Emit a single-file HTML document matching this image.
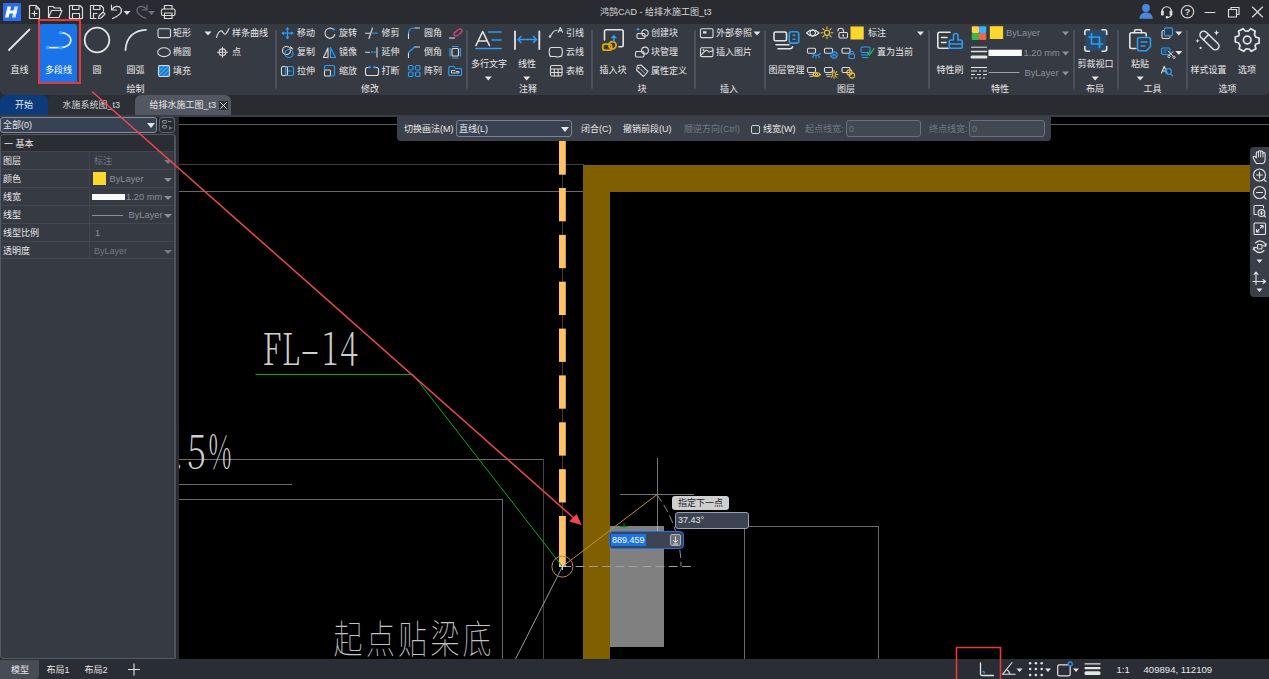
<!DOCTYPE html>
<html lang="zh-CN">
<head>
<meta charset="utf-8">
<title>鸿鹄CAD - 给排水施工图_t3</title>
<style>
*{box-sizing:border-box;margin:0;padding:0}
html,body{width:1269px;height:679px;overflow:hidden;background:#2a2b31}
body{font-family:"Liberation Sans","Noto Sans CJK SC",sans-serif;font-size:9px;color:#e6e6e6;position:relative}
.abs{position:absolute}
#title{position:absolute;left:0;top:0;width:1269px;height:24px;background:#2a2b31}
#ribbon{position:absolute;left:0;top:24px;width:1269px;height:71px;background:#363a43;border-radius:0 0 5px 5px}
#tabs{position:absolute;left:0;top:95px;width:1269px;height:20px;background:#2a2b31}
#strip{position:absolute;left:0;top:115px;width:1269px;height:2px;background:#3a3d46}
#left{position:absolute;left:0;top:117px;width:179px;height:542px;background:#2a2c33}
#canvas{position:absolute;left:179px;top:117px;width:1090px;height:542px;background:#000;overflow:hidden}
#status{position:absolute;left:0;top:659px;width:1269px;height:20px;background:#2b2d34}
.t{position:absolute;white-space:nowrap;line-height:12px;height:12px;font-size:9px;color:#e8e8e8;transform:translateY(-50%)}
.tc{transform:translate(-50%,-50%)}
.g{color:#8b909a}
.sep{position:absolute;top:30px;width:2px;height:59px;background:#4d515b;margin-left:-0.500px;border-radius:1px}
svg{position:absolute;left:0;top:0;overflow:visible}
</style>
</head>
<body>
<div id="title">
<div class="abs" style="left:3px;top:3px;width:18px;height:18px;background:#2a6cf0;border-radius:1px"></div>
<svg width="1269" height="24" viewBox="0 0 1269 24">
<!-- logo H -->
<g fill="#fff"><path d="M7.5,6.5 H11 L8.6,17.5 H5 Z"/><path d="M14.5,6.5 H18 L15.6,17.5 H12 Z" fill="#cfe6ff"/><path d="M8,10.5 H17 L16.3,13.5 H7.3 Z"/></g>
<g stroke="#dcdcdc" stroke-width="1.150" fill="none" stroke-linecap="round" stroke-linejoin="round">
<!-- new -->
<path d="M29.5,5.5 H36 L39.5,9 V18.5 H29.5 Z M36,5.5 V9 H39.5"/><path d="M34.5,11 V16 M32,13.5 H37" />
<!-- open -->
<path d="M48.500,17.5 V6.5 H53 L54.5,8 H60.5 V10"/><path d="M48.500,17.500 L51.500,10.500 H62 L59,17.500 Z"/>
<!-- save -->
<path d="M69.500,5.500 H80 L82.500,8 V18.500 H69.500 Z"/><path d="M72.500,5.500 V9.500 H79 V5.500 M72.500,18.500 V13.500 H79.500 V18.500"/>
<!-- save as -->
<path d="M96,18.500 H90.500 V5.500 H101 L103.500,8 V11"/><path d="M93.500,5.500 V9.500 H100 V5.500 M93.500,18.500 V13.500 H97"/><path d="M98.500,18.500 L99,16 L103,12 L105,14 L101,18 Z"/>
<!-- undo -->
<path d="M111.500,5 V10 H116.500"/><path d="M112,9.500 C114,6 119,5 121,8.500 C123,12 119,16 112.500,18.500"/>
</g>
<path d="M123.500,11 H130.500 L127,15 Z" fill="#dcdcdc"/>
<g stroke="#6e727b" stroke-width="1.150" fill="none" stroke-linecap="round" stroke-linejoin="round">
<path d="M147,5 V10 H142"/><path d="M146.500,9.500 C144.500,6 139.500,5 137.500,8.500 C135.500,12 139.500,16 146,18.500"/>
</g>
<path d="M148,11 H155 L151.500,15 Z" fill="#6e727b"/>
<g stroke="#dcdcdc" stroke-width="1.150" fill="none" stroke-linecap="round" stroke-linejoin="round">
<!-- print -->
<path d="M164.500,9 V5.500 H172 V9"/><rect x="161.500" y="9" width="13.500" height="6.500" rx="1.500"/><path d="M164.500,13 H172 V18.500 H164.500 Z"/>
</g>
<!-- right icons -->
<g fill="#4a88e0"><circle cx="1146" cy="8" r="3.900"/><path d="M1139.500,18.800 C1139.500,14.500 1142.500,12.500 1146,12.500 C1149.500,12.500 1152.800,14.500 1152.800,18.800 Z"/></g>
<g stroke="#dcdcdc" stroke-width="1.150" fill="none" stroke-linecap="round">
<path d="M1162,12.500 V11.500 A4.700,4.700 0 0 1 1171.400,11.500 V13.500 C1171.400,16 1169.500,17.300 1167.500,17.300"/>
<circle cx="1187.500" cy="11.700" r="6.200"/>
<path d="M1205,12.500 H1215"/>
<path d="M1228.500,9.500 H1236.500 V17 H1228.500 Z M1231,9.500 V7.500 H1239 V14.500 H1236.500"/>
<path d="M1252.500,7 L1262.500,17 M1262.500,7 L1252.500,17"/>
</g>
<g fill="#dcdcdc"><rect x="1161" y="10.500" width="2.800" height="5" rx="1"/><rect x="1169.600" y="10.500" width="2.800" height="5" rx="1"/><circle cx="1167" cy="17.300" r="1.300"/></g>
<text x="1187.500" y="15.200" font-family="'Liberation Sans',sans-serif" font-size="9.500" font-weight="bold" fill="#dcdcdc" text-anchor="middle">?</text>
</svg>
<span class="t" style="left:600px;top:12px;color:#d8d8d8">鸿鹄CAD - 给排水施工图_t3</span>

</div>
<div id="ribbon"></div>
<div id="tabs">
<div class="abs" style="left:0;top:0px;width:48px;height:20px;background:#0b3b7d;border-radius:6px 6px 0 0"></div>
<span class="t tc" style="left:24px;top:10px;font-size:9px">开始</span>
<div class="abs" style="left:48px;top:0px;width:87px;height:20px;background:#2d2f36;border-radius:6px 6px 0 0"></div>
<span class="t" style="left:62.500px;top:10px;color:#d8d8d8;font-size:9px">水施系统图_t3</span>
<div class="abs" style="left:135px;top:0px;width:96px;height:20px;background:#535761;border-radius:6px 6px 0 0"></div>
<span class="t" style="left:149.500px;top:10px;font-size:9px">给排水施工图_t3</span>
<svg width="10" height="10" style="left:218.500px;top:5.500px"><rect x="0.500" y="0.500" width="8" height="8" fill="#2b2e35" stroke="#2b2e35"/><path d="M1.300,1.300 L7.700,7.700 M7.700,1.300 L1.300,7.700" stroke="#e4e4e4" stroke-width="1"/></svg>

</div>
<div id="strip"></div>
<div id="left">
<div class="abs" style="left:0;top:0;width:157px;height:16px;background:#374253;border:1px solid #8a8f99;border-radius:3px"></div>
<span class="t" style="left:3px;top:8px">全部(0)</span>
<div class="abs" style="left:147px;top:6px;border:4px solid transparent;border-top:5px solid #e6e6e6;border-bottom:0"></div>
<div class="abs" style="left:159px;top:0;width:16px;height:16px;border:1px solid #5d626c;border-radius:3px"></div>
<svg width="16" height="16" style="left:159px;top:0"><g stroke="#8a8f99" stroke-width="1" fill="none"><rect x="3.500" y="3.500" width="4" height="2.500" rx="0.500"/><rect x="3.500" y="8.500" width="4" height="2.500" rx="0.500"/><path d="M9,4.500 H12.500"/></g><path d="M10,9 L13.500,11 L10,13 Z" fill="#6e737d"/></svg>
<!-- property panel -->
<div class="abs" style="left:0;top:17px;width:176px;height:525px;background:#363a43;border:1px solid #555963;border-right:2px solid #4f535d;border-radius:4px 4px 0 4px;overflow:hidden">
<div class="abs" style="left:0;top:0;width:176px;height:16px;background:#2b2d34"></div>
<div class="abs" style="left:0;top:16px;width:176px;height:109px;background:#363a43"></div>
<div class="abs" style="left:0;top:16px;width:176px;height:1px;background:#424650"></div>
<div class="abs" style="left:0;top:34px;width:176px;height:1px;background:#424650"></div>
<div class="abs" style="left:0;top:52px;width:176px;height:1px;background:#424650"></div>
<div class="abs" style="left:0;top:70px;width:176px;height:1px;background:#424650"></div>
<div class="abs" style="left:0;top:88px;width:176px;height:1px;background:#424650"></div>
<div class="abs" style="left:0;top:106px;width:176px;height:1px;background:#424650"></div>
<div class="abs" style="left:0;top:123px;width:176px;height:1px;background:#424650"></div>
<div class="abs" style="left:88px;top:16px;width:1px;height:108px;background:#40444f"></div>
</div>
<span class="t" style="left:4px;top:26.500px">一 基本</span>
<span class="t" style="left:3px;top:44px">图层</span>
<span class="t" style="left:3px;top:62px">颜色</span>
<span class="t" style="left:3px;top:80px">线宽</span>
<span class="t" style="left:3px;top:98px">线型</span>
<span class="t" style="left:3px;top:116px">线型比例</span>
<span class="t" style="left:3px;top:134px">透明度</span>
<span class="t g" style="left:94px;top:44px;color:#747985">标注</span>
<div class="abs" style="left:93px;top:55px;width:13px;height:13px;background:#fad72d"></div>
<span class="t g" style="left:109.500px;top:62px;font-size:9.300px">ByLayer</span>
<div class="abs" style="left:92px;top:77px;width:33px;height:6px;background:#fafafa"></div>
<span class="t g" style="left:126px;top:80px;font-size:9.300px">1.20 mm</span>
<div class="abs" style="left:92px;top:98px;width:31px;height:1px;background:#8b909a"></div>
<span class="t g" style="left:128.500px;top:98px;font-size:9.300px">ByLayer</span>
<span class="t g" style="left:95px;top:116px;font-size:9.300px">1</span>
<span class="t g" style="left:94px;top:134px;font-size:9px;color:#747985">ByLayer</span>
<div class="abs" style="left:164px;top:43px;border:4px solid transparent;border-top:4.500px solid #747985;border-bottom:0"></div>
<div class="abs" style="left:164px;top:61px;border:4px solid transparent;border-top:4.500px solid #8b909a;border-bottom:0"></div>
<div class="abs" style="left:164px;top:79px;border:4px solid transparent;border-top:4.500px solid #8b909a;border-bottom:0"></div>
<div class="abs" style="left:164px;top:97px;border:4px solid transparent;border-top:4.500px solid #8b909a;border-bottom:0"></div>
<div class="abs" style="left:164px;top:133px;border:4px solid transparent;border-top:4.500px solid #747985;border-bottom:0"></div>

</div>
<div id="canvas">
<svg width="1090" height="542" viewBox="179 117 1090 542" shape-rendering="auto">
<!-- grey thin lines -->
<g stroke="#6a6a6a" stroke-width="1" fill="none" shape-rendering="crispEdges">
<line x1="179" y1="124.5" x2="1269" y2="124.5" stroke="#5c5c5c"/>
<line x1="179" y1="164.5" x2="584" y2="164.5" stroke="#3e3e3e"/>
<line x1="179" y1="191.5" x2="584" y2="191.5"/>
<line x1="179" y1="459.5" x2="544" y2="459.5"/><line x1="543.5" y1="459" x2="543.5" y2="659" stroke="#444"/>
<line x1="179" y1="484.5" x2="292" y2="484.5"/>
<polyline points="179,499.5 502.5,499.5 502.5,659"/>
<polyline points="744.5,659 744.5,526.5 878.5,526.5 878.5,659"/>
</g>
<!-- brown wall -->
<path d="M583,165 H1269 V192 H610 V659 H583 Z" fill="#7f5f00"/>
<!-- grey block -->
<rect x="610" y="526" width="54" height="121" fill="#808080"/>
<!-- dashed orange line -->
<line x1="562.5" y1="141" x2="562.5" y2="566" stroke="#4d3d00" stroke-width="1"/>
<g fill="#ffc266">
<rect x="559" y="141.0" width="6.800" height="33.7"/>
<rect x="559" y="188.0" width="6.800" height="33.3"/>
<rect x="559" y="234.9" width="6.800" height="33.3"/>
<rect x="559" y="281.7" width="6.800" height="33.3"/>
<rect x="559" y="328.6" width="6.800" height="33.3"/>
<rect x="559" y="375.4" width="6.800" height="33.3"/>
<rect x="559" y="422.3" width="6.800" height="33.3"/>
<rect x="559" y="469.2" width="6.800" height="33.3"/>
<rect x="559" y="516.0" width="6.800" height="50.5"/>
</g>
<!-- green leader -->
<polyline points="255.500,374.500 413,374.500 562.400,566.600" stroke="#00b000" stroke-width="1" fill="none"/>
<!-- grey slanted line -->
<line x1="562.4" y1="566.6" x2="515.5" y2="659" stroke="#9a9a9a" stroke-width="1"/>
<!-- crosshair -->
<g stroke="#757575" stroke-width="1" shape-rendering="crispEdges">
<line x1="657.5" y1="458" x2="657.5" y2="531"/>
<line x1="620" y1="494.5" x2="694" y2="494.5"/>
</g>
<!-- light stripe in grey block -->
<rect x="657" y="526" width="1" height="6" fill="#b0b0b0"/>
<!-- green tick -->
<path d="M620,526.500 H628 M624,523 V528" stroke="#009000" stroke-width="1" fill="none"/>
<!-- yellow rubber band -->
<line x1="562.4" y1="566.6" x2="657" y2="494.500" stroke="#b89a14" stroke-width="1"/>
<!-- dashed horizontal + arc -->
<line x1="562.400" y1="566.500" x2="692" y2="566.500" stroke="#a0a0a0" stroke-width="1" stroke-dasharray="8.800,4.500"/>
<path d="M657,495 A119,119 0 0 1 681,566" stroke="#909090" stroke-width="1" fill="none" stroke-dasharray="8,4"/>
<!-- snap circle -->
<circle cx="562.4" cy="566.6" r="10.5" stroke="#b8875a" stroke-width="1" fill="none"/>
<path d="M559,566.5 H566 M562.5,563 V570" stroke="#d0d0d0" stroke-width="1"/>
<!-- CAD texts -->
<text y="364.600" font-family="'Noto Serif CJK SC','Liberation Serif',serif" font-weight="200" font-size="44.500" fill="#cfcfcf"><tspan x="262.500" textLength="19" lengthAdjust="spacingAndGlyphs">F</tspan><tspan x="282" textLength="18" lengthAdjust="spacingAndGlyphs">L</tspan><tspan x="300" textLength="20" lengthAdjust="spacingAndGlyphs">-</tspan><tspan x="322" textLength="16" lengthAdjust="spacingAndGlyphs">1</tspan><tspan x="340" textLength="18" lengthAdjust="spacingAndGlyphs">4</tspan></text>
<text y="467.800" font-family="'Noto Serif CJK SC','Liberation Serif',serif" font-weight="200" font-size="45.500" fill="#cfcfcf"><tspan x="172" textLength="12" lengthAdjust="spacingAndGlyphs">.</tspan><tspan x="187" textLength="19" lengthAdjust="spacingAndGlyphs">5</tspan><tspan x="208.500" textLength="23" lengthAdjust="spacingAndGlyphs">%</tspan></text>
<g transform="translate(0,652.500) scale(1,1.330)"><text y="0" x="333.500 366 398 430.500 462.500" font-family="'Noto Sans CJK SC',sans-serif" font-weight="100" font-size="29" fill="#c4c4c4">起点贴梁底</text></g>
</svg>
<!-- options bar -->
<div class="abs" style="left:218px;top:0;width:654px;height:24px;background:#3c404b;border-radius:0 0 4px 4px"></div>
<span class="t" style="left:225px;top:12px">切换画法(M)</span>
<div class="abs" style="left:277px;top:3px;width:116px;height:17px;background:#384252;border:1px solid #7d828d;border-radius:3px"></div>
<span class="t" style="left:280px;top:12px">直线(L)</span>
<div class="abs" style="left:382px;top:10px;border:4px solid transparent;border-top:5px solid #e6e6e6;border-bottom:0"></div>
<span class="t" style="left:402px;top:12px">闭合(C)</span>
<span class="t" style="left:444px;top:12px">撤销前段(U)</span>
<span class="t g" style="left:505px;top:12px;color:#747985">顺逆方向(Ctrl)</span>
<div class="abs" style="left:572px;top:8px;width:9px;height:9px;border:1px solid #cfcfcf;border-radius:2px"></div>
<span class="t" style="left:584px;top:12px">线宽(W)</span>
<span class="t g" style="left:626px;top:12px;color:#747985">起点线宽:</span>
<div class="abs" style="left:667px;top:3px;width:75px;height:17px;background:#434751;border:1px solid #6b707b;border-radius:3px"></div>
<span class="t g" style="left:670px;top:12px;color:#747985">0</span>
<span class="t g" style="left:750px;top:12px;color:#747985">终点线宽:</span>
<div class="abs" style="left:790px;top:3px;width:76px;height:17px;background:#434751;border:1px solid #6b707b;border-radius:3px"></div>
<span class="t g" style="left:793px;top:12px;color:#747985">0</span>
<!-- dynamic input -->
<div class="abs" style="left:493px;top:379px;width:57px;height:14px;background:#cfcfcf;border-radius:3px"></div>
<span class="t" style="left:499px;top:386px;color:#222">指定下一点</span>
<div class="abs" style="left:496px;top:394.500px;width:74px;height:17px;background:#3c4353;border:1px solid #9aa0ab;border-radius:3px"></div>
<span class="t" style="left:499px;top:403px">37.43°</span>
<div class="abs" style="left:430px;top:414px;width:75px;height:18px;background:#3c4353;border:1.500px solid #1a73e8;border-radius:4px"></div>
<div class="abs" style="left:432px;top:417px;width:35px;height:12px;background:#1a73e8"></div>
<span class="t" style="left:433px;top:423px;color:#fff">889.459</span>
<div class="abs" style="left:491px;top:417px;width:11px;height:12px;background:#6a6f7a;border:1px solid #b0b4bc;border-radius:2px"></div>
<svg width="11" height="12" style="left:491px;top:417px"><path d="M5.5,2.5 V8 M3,6 L5.5,8.5 L8,6 M3,10 H8" stroke="#e0e0e0" stroke-width="1" fill="none"/></svg>
<!-- nav bar -->
<div class="abs" style="left:1071px;top:30px;width:19px;height:150px;background:#3a3e48;border-radius:4px 0 0 4px"></div>
<svg width="1090" height="542" viewBox="179 117 1090 542">
<g stroke="#e4e4e4" stroke-width="1.100" fill="none" stroke-linecap="round" stroke-linejoin="round">
<!-- hand -->
<path d="M1256.500,163.500 Q1254,160 1253.300,157.800 Q1253,156.300 1254.300,156.300 Q1255.300,156.300 1256.300,158 V153 Q1256.300,151.800 1257.400,151.800 Q1258.500,151.800 1258.500,153 V151.800 Q1258.500,150.700 1259.600,150.700 Q1260.700,150.700 1260.700,151.800 V152 Q1260.700,151 1261.800,151 Q1262.900,151 1262.900,152.200 V153.500 Q1262.900,152.500 1264,152.500 Q1265.100,152.500 1265.100,153.700 V159 Q1265.100,163.500 1262,163.500 Z"/>
<path d="M1258.500,153 V157 M1260.700,152 V157 M1262.900,153.500 V157" stroke-width="0.900"/>
<!-- zoom in -->
<circle cx="1259.500" cy="175" r="6"/><path d="M1256.500,175 H1262.500 M1259.500,172 V178 M1264,179.500 L1266,181.500"/>
<!-- zoom out -->
<circle cx="1259.500" cy="192.500" r="6"/><path d="M1256.500,192.500 H1262.500 M1264,197 L1266,199"/>
<!-- zoom window -->
<path d="M1263.500,208 V206.500 Q1263.500,205.500 1262.500,205.500 H1255 Q1254,205.500 1254,206.500 V213.500 Q1254,214.500 1255,214.500 H1256.500"/>
<circle cx="1261.500" cy="213" r="3.400"/><path d="M1260,213 H1263 M1261.500,211.500 V214.500 M1264,215.500 L1265.500,217"/>
<!-- extents -->
<rect x="1254" y="223" width="11.500" height="11.500" rx="1.300"/><path d="M1260.500,225.500 H1263 V228 M1263,225.500 L1260.500,228 M1259,232 H1256.500 V229.500 M1256.500,232 L1259,229.500"/>
<!-- orbit -->
<rect x="1257.500" y="244.500" width="4.500" height="4.500" rx="0.800"/>
<path d="M1255.500,243 Q1260,238.500 1265,243.500 L1265.500,246 M1263,245.800 L1265.500,246.300 L1266.300,243.800"/>
<path d="M1264,250.500 Q1259.500,255 1254.500,250 L1254,247.500 M1256.500,247.700 L1254,247.200 L1253.200,249.700"/>
<!-- ucs -->
<path d="M1256,272 V281.500 H1265.500 M1254,274.500 L1256,272 L1258,274.500 M1263,279.500 L1265.500,281.500 L1263,283.500 M1253,281.500 H1256 M1256,281.500 V284.500"/>
</g>
<g fill="#e4e4e4"><path d="M1256.500,259.500 H1262.500 L1259.500,263 Z"/><path d="M1256.500,288.500 H1262.500 L1259.500,292 Z"/></g>
</svg>


</div>
<div id="status">
<div class="abs" style="left:0;top:1px;width:39px;height:19px;background:#484c57;border-radius:0 0 4px 0"></div>
<span class="t tc" style="left:20px;top:11px">模型</span>
<span class="t" style="left:46.500px;top:11px;font-size:9px">布局1</span>
<span class="t" style="left:84.500px;top:11px;font-size:9px">布局2</span>
<svg width="1269" height="20" viewBox="0 659 1269 20">
<path d="M128,669.500 H140 M134,663.500 V675.500" stroke="#e4e4e4" stroke-width="1.100"/>
<g stroke="#e4e4e4" stroke-width="1.300" fill="none" stroke-linecap="round" stroke-linejoin="round">
<path d="M980.500,663 V674 Q980.500,675.500 982,675.500 H993.500"/>
<path d="M1012,662.500 L1002.500,674.300 H1015.200 M1006.500,669.500 Q1009.500,671 1009.800,674.300" stroke-width="1.100"/>
<rect x="1057.700" y="664.800" width="12.500" height="11" rx="1.500" stroke-width="1.200"/>
</g>
<path d="M982.500,671.500 Q984.500,671.500 984.500,673.500" stroke="#2a9df4" stroke-width="1.300" fill="none"/>
<g fill="#e4e4e4">
<path d="M1016.500,668.500 H1022.500 L1019.500,672 Z"/><path d="M1045,668.500 H1051 L1048,672 Z"/><path d="M1073,668.500 H1079 L1076,672 Z"/>
<g><circle cx="1030.1" cy="663.3" r="1.250"/><circle cx="1035.9" cy="663.3" r="1.250"/><circle cx="1041.7" cy="663.3" r="1.250"/><circle cx="1030.1" cy="669.1" r="1.250"/><circle cx="1035.9" cy="669.1" r="1.250"/><circle cx="1041.7" cy="669.1" r="1.250"/><circle cx="1030.1" cy="674.9" r="1.250"/><circle cx="1035.9" cy="674.9" r="1.250"/><circle cx="1041.7" cy="674.9" r="1.250"/></g>
<rect x="1084.500" y="663.200" width="16" height="1.300" rx="0.600"/><rect x="1084.500" y="667" width="16" height="2.200" rx="1"/><rect x="1084.500" y="671.300" width="16" height="3.600" rx="1.500"/>
</g>
<circle cx="1070.200" cy="664" r="2.100" fill="#2b2d34" stroke="#2a9df4" stroke-width="1.100"/>
</svg>
<span class="t" style="left:1116.500px;top:10.500px;font-size:9.500px">1:1</span>
<span class="t" style="left:1143.500px;top:10.500px;font-size:9.600px">409894, 112109</span>

</div>
<!-- selected button -->
<div class="abs" style="left:39px;top:24px;width:38px;height:58px;background:#1a73e8;border-radius:3px 3px 0 0"></div>
<div class="abs" style="left:37.500px;top:19px;width:43px;height:65px;border:2px solid #e23b3b"></div>
<!-- separators -->
<div class="sep" style="left:275px"></div>
<div class="sep" style="left:466px"></div>
<div class="sep" style="left:591px"></div>
<div class="sep" style="left:694px"></div>
<div class="sep" style="left:764px"></div>
<div class="sep" style="left:928px"></div>
<div class="sep" style="left:1073px"></div>
<div class="sep" style="left:1117px"></div>
<div class="sep" style="left:1186px"></div>
<!-- group labels -->
<span class="t tc" style="left:135.500px;top:89px">绘制</span>
<span class="t tc" style="left:370px;top:89px">修改</span>
<span class="t tc" style="left:528px;top:89px">注释</span>
<span class="t tc" style="left:642px;top:89px">块</span>
<span class="t tc" style="left:729px;top:89px">插入</span>
<span class="t tc" style="left:846px;top:89px">图层</span>
<span class="t tc" style="left:1000px;top:89px">特性</span>
<span class="t tc" style="left:1095px;top:89px">布局</span>
<span class="t tc" style="left:1152.500px;top:89px">工具</span>
<span class="t tc" style="left:1227.500px;top:89px">选项</span>
<!-- draw group -->
<span class="t tc" style="left:19.500px;top:70px">直线</span>
<span class="t tc" style="left:58.500px;top:70px;color:#fff">多段线</span>
<span class="t tc" style="left:97px;top:70px">圆</span>
<span class="t tc" style="left:135.500px;top:70px">圆弧</span>
<span class="t" style="left:173px;top:33px">矩形</span>
<span class="t" style="left:173px;top:52px">椭圆</span>
<span class="t" style="left:173px;top:71px">填充</span>
<span class="t" style="left:232px;top:33px">样条曲线</span>
<span class="t" style="left:232px;top:52px">点</span>
<!-- modify group -->
<span class="t" style="left:297px;top:33px">移动</span>
<span class="t" style="left:297px;top:52px">复制</span>
<span class="t" style="left:297px;top:71px">拉伸</span>
<span class="t" style="left:339px;top:33px">旋转</span>
<span class="t" style="left:339px;top:52px">镜像</span>
<span class="t" style="left:339px;top:71px">缩放</span>
<span class="t" style="left:381.500px;top:33px">修剪</span>
<span class="t" style="left:381.500px;top:52px">延伸</span>
<span class="t" style="left:381.500px;top:71px">打断</span>
<span class="t" style="left:424px;top:33px">圆角</span>
<span class="t" style="left:424px;top:52px">倒角</span>
<span class="t" style="left:424px;top:71px">阵列</span>
<!-- annotate -->
<span class="t tc" style="left:489px;top:64px">多行文字</span>
<span class="t tc" style="left:527px;top:64px">线性</span>
<span class="t" style="left:566px;top:33px">引线</span>
<span class="t" style="left:566px;top:52px">云线</span>
<span class="t" style="left:566px;top:71px">表格</span>
<!-- block -->
<span class="t tc" style="left:613px;top:70px">插入块</span>
<span class="t" style="left:651px;top:33px">创建块</span>
<span class="t" style="left:651px;top:52px">块管理</span>
<span class="t" style="left:651px;top:71px">属性定义</span>
<!-- insert -->
<span class="t" style="left:716px;top:33px">外部参照</span>
<span class="t" style="left:716px;top:52px">插入图片</span>
<!-- layers -->
<span class="t tc" style="left:786.500px;top:70px">图层管理</span>
<span class="t" style="left:868px;top:33px">标注</span>
<span class="t" style="left:877px;top:52px">置为当前</span>
<!-- properties -->
<span class="t tc" style="left:950px;top:70px">特性刷</span>
<span class="t g" style="left:1006px;top:33px;font-size:9.300px">ByLayer</span>
<span class="t g" style="left:1023.500px;top:53px;font-size:9.300px">1.20 mm</span>
<span class="t g" style="left:1024.500px;top:72.500px;font-size:9.300px">ByLayer</span>
<!-- layout/tools/options -->
<span class="t tc" style="left:1095.500px;top:64px">剪裁视口</span>
<span class="t tc" style="left:1140px;top:64px">粘贴</span>
<span class="t tc" style="left:1208.500px;top:70px">样式设置</span>
<span class="t tc" style="left:1247px;top:70px">选项</span>
<svg width="1269" height="100" viewBox="0 0 1269 100">
<defs>
<pattern id="hatch" width="3" height="3" patternUnits="userSpaceOnUse" patternTransform="rotate(45)"><rect width="3" height="3" fill="#1c6fb8"/><rect width="1.500" height="3" fill="#35a7ff"/></pattern>
</defs>
<!-- Draw group icons -->
<g stroke="#e4e4e4" stroke-width="1.800" fill="none" stroke-linecap="round">
<path d="M9,50 L29.500,29.500"/>
<circle cx="97" cy="40" r="12.300"/>
<path d="M125.500,50 C126,38 134,30 146,29.800"/>
</g>
<g stroke="#e4e4e4" stroke-width="1.800" fill="none" stroke-linecap="round">
<path d="M47.500,47.700 H60.500 A10.300,7.500 0 0 0 60.500,32.700"/>
</g>
<g fill="#33aaff"><circle cx="47.300" cy="47.700" r="1.900"/><circle cx="60.500" cy="47.700" r="1.900"/><circle cx="60.500" cy="32.700" r="1.900"/></g>
<g stroke="#dcdcdc" stroke-width="1.100" fill="none" stroke-linecap="round" stroke-linejoin="round">
<rect x="158" y="28.800" width="12.500" height="8.800" rx="1.500"/>
<ellipse cx="164" cy="52.200" rx="6.300" ry="4.400"/>
<rect x="158.500" y="65.500" width="11" height="11" rx="1.500" fill="url(#hatch)"/>
<path d="M216.500,37.500 C219,29 222,30 223.500,33 C225,36 227,33 229,28.500"/>
<circle cx="222.500" cy="52.200" r="3.300"/><path d="M217.500,52.200 H227.500 M222.500,47.200 V57.200"/>
</g>
<path d="M204.500,31.500 H211.500 L208,35.500 Z" fill="#e4e4e4"/>
<!-- Modify icons -->
<g stroke="#2a9df4" stroke-width="1.200" fill="none" stroke-linecap="round" stroke-linejoin="round">
<path d="M282.500,33.200 H292.500 M287.500,28.200 V38.200"/>
</g>
<g fill="#2a9df4"><path d="M287.500,27 L289.500,29.800 H285.500 Z M287.500,39.400 L289.500,36.600 H285.500 Z M281.300,33.200 L284.100,31.200 V35.200 Z M293.700,33.200 L290.900,31.200 V35.200 Z"/></g>
<g stroke="#dcdcdc" stroke-width="1.100" fill="none" stroke-linecap="round" stroke-linejoin="round">
<!-- copy: white circle + blue circle -->
<circle cx="286.500" cy="50.500" r="4"/>
<path d="M290.500,47 L292.500,49"/>
<!-- stretch -->
<rect x="281.500" y="66.500" width="6" height="9" rx="1.500"/>
<!-- rotate -->
<path d="M333.500,29.600 A5,5 0 1 0 334.800,34.500"/>
<!-- mirror -->
<path d="M328,48 V57.500 H323.500 Z"/>
<!-- scale small -->
<rect x="324.500" y="70" width="6" height="6" rx="1"/>
<!-- trim -->
<path d="M365.500,33.200 H370 M372.500,28 L369,38.500"/>
<!-- extend -->
<path d="M365.500,52.200 H369.500 M377,47.500 V57"/>
<!-- break -->
<path d="M368.500,67.500 H367.500 Q365.500,67.500 365.500,69.500 V73.500 Q365.500,75.500 367.500,75.500 H376.500 Q378.500,75.500 378.500,73.500 V69.500 Q378.500,67.500 376.500,67.500 H375.500"/>
<!-- fillet -->
<path d="M408.500,38.500 V33 M415,28 H419.500"/>
<!-- chamfer -->
<path d="M408.500,57.500 V52.500 M414.500,47 H419.500"/>
</g>
<g stroke="#2a9df4" stroke-width="1.200" fill="none" stroke-linecap="round" stroke-linejoin="round">
<circle cx="289" cy="53.500" r="4"/>
<rect x="285.500" y="66.500" width="8" height="9" rx="1.500"/>
<path d="M288.500,71 H291"/>
<path d="M330.500,47.500 L335.500,57.500 H330.500 Z"/>
<path d="M324.500,70 V67 Q324.500,65.500 326,65.500 H333 Q334.500,65.500 334.500,67 V74.500 Q334.500,76 333,76 H330.500"/>
<path d="M372.500,33.200 H378" stroke-dasharray="1.500,1.500"/>
<path d="M371.500,52.200 H375.500" stroke-dasharray="1.500,1.500"/>
<path d="M408.500,33 Q408.500,28 415,28"/>
<path d="M408.500,52.500 L414.500,47"/>
<rect x="408.500" y="65.500" width="4.500" height="4.500" rx="1.300"/><rect x="415.500" y="65.500" width="4.500" height="4.500" rx="1.300"/><rect x="408.500" y="72" width="4.500" height="4.500" rx="1.300"/><rect x="415.500" y="72" width="4.500" height="4.500" rx="1.300"/>
</g>
<g fill="#2a9df4"><circle cx="333.500" cy="29.200" r="1.300"/><circle cx="369.500" cy="67.300" r="1.300"/><circle cx="374.500" cy="67.300" r="1.300"/></g>
<!-- eraser -->
<path d="M449,38 H455" stroke="#dcdcdc" stroke-width="1.100"/>
<rect x="453.500" y="30.500" width="9" height="4" rx="2" transform="rotate(-40 458 32.500)" fill="none" stroke="#e0457b" stroke-width="1.200"/>
<!-- frame icon -->
<rect x="452" y="48.500" width="6.500" height="7.500" rx="1" fill="none" stroke="#dcdcdc" stroke-width="1.100"/>
<path d="M450,48 V56.500 M460.500,48 V56.500 M452,46.500 H458.500 M452,58 H458.500" stroke="#2a9df4" stroke-width="1.200" fill="none"/>
<!-- folder icon -->
<path d="M448.800,67.500 Q448.800,66.500 449.800,66.500 H454 L455.500,68.500 H460.500 Q461.500,68.500 461.500,69.500 V74.500 Q461.500,75.500 460.500,75.500 H449.800 Q448.800,75.500 448.800,74.500 Z" fill="none" stroke="#2a9df4" stroke-width="1.200"/>
<path d="M451.500,73 V70.500 H455 L456,71.500 H459 V73 Z" fill="none" stroke="#dcdcdc" stroke-width="0.900"/>
<!-- Multiline text icon -->
<g stroke="#e4e4e4" stroke-width="1.600" fill="none" stroke-linecap="round" stroke-linejoin="round">
<path d="M476,45.500 L482.700,31.500 L489.500,45.500 M478.500,41 H487"/>
</g>
<g stroke="#2a9df4" stroke-width="1.600" fill="none" stroke-linecap="round">
<path d="M488.500,32 H501 M492,40 H501 M476,48.500 H501"/>
</g>
<path d="M484.800,76.500 H491.800 L488.300,80.500 Z" fill="#e4e4e4"/>
<!-- Linear dim icon -->
<g stroke="#e4e4e4" stroke-width="1.800" fill="none" stroke-linecap="round">
<path d="M515,31.500 V49 M539.300,31.500 V49"/>
</g>
<g stroke="#2a9df4" stroke-width="1.600" fill="none" stroke-linecap="round" stroke-linejoin="round">
<path d="M518,39.500 H536.500 M521,36.500 L518,39.500 L521,42.500 M533.500,36.500 L536.500,39.500 L533.500,42.500"/>
</g>
<path d="M523.200,76.500 H530.200 L526.700,80.500 Z" fill="#e4e4e4"/>
<!-- leader, cloud, table -->
<g stroke="#dcdcdc" stroke-width="1.100" fill="none" stroke-linecap="round" stroke-linejoin="round">
<path d="M550,36.500 L553.500,31.500 Q554.500,30.200 557,30.200"/>
<path d="M558.200,32.300 L560.300,27.500 L562.500,32.300 M559,30.800 H561.700"/>
<path d="M551.500,47.500 H560 Q562,47.500 562,49.500 Q563,52.200 562,54.500 Q562,56.500 560,56.500 Q557.500,57.500 555.500,56.500 H551.500 Q549.500,56.500 549.500,54.500 Q548.700,52.200 549.500,49.500 Q549.500,47.500 551.500,47.500 Z"/>
<rect x="550.500" y="65.500" width="11.500" height="10.500" rx="1.500"/><path d="M550.500,69 H562 M550.500,72.500 H562 M554.300,69 V76 M558.200,69 V76"/>
</g>
<circle cx="550" cy="36.500" r="1.200" fill="#dcdcdc"/>
<!-- insert block -->
<g stroke="#e4e4e4" stroke-width="1.600" fill="none" stroke-linecap="round" stroke-linejoin="round">
<path d="M604.500,40 V31.500 Q604.500,29.800 606.200,29.800 H621.500 Q623.200,29.800 623.200,31.500 V45 Q623.200,46.700 621.500,46.700 H619"/>
</g>
<g stroke="#e6a700" stroke-width="1.800" fill="none">
<rect x="602.800" y="44.200" width="8.700" height="6" rx="2"/>
<circle cx="612.500" cy="45.200" r="3.600"/>
</g>
<path d="M613.900,42 V37.500" stroke="#2a9df4" stroke-width="1.600"/>
<path d="M613.900,34.500 L617,38.200 H610.800 Z" fill="#2a9df4"/>
<!-- block list icons -->
<g stroke="#dcdcdc" stroke-width="1.100" fill="none" stroke-linecap="round" stroke-linejoin="round">
<rect x="637" y="33.500" width="8" height="5" rx="1.200"/><circle cx="645" cy="33" r="3.200"/>
<rect x="635.500" y="51.500" width="8.500" height="5.500" rx="1.200"/><circle cx="645" cy="50.500" r="3.400"/>
<path d="M637.500,65.500 L641,65 L648,71.500 L643.500,76.500 L636.500,70 Z"/><path d="M640.500,69 L644.500,73" stroke-width="0.800"/>
<!-- xref / image -->
<rect x="700.500" y="28.800" width="12.500" height="8.800" rx="1.200"/>
<rect x="700.500" y="47.800" width="12.500" height="8.800" rx="1.200"/><path d="M701,55 L705,51 Q707,49.500 709,52 L713,50.500"/>
</g>
<rect x="703" y="31.200" width="3.500" height="2.300" fill="#dcdcdc"/>
<circle cx="703.500" cy="50" r="0.900" fill="#dcdcdc"/>
<circle cx="638" cy="29.200" r="1.300" fill="#2a9df4"/>
<circle cx="638.700" cy="68" r="0.900" fill="#dcdcdc"/>
<path d="M753.500,31.500 H760.500 L757,35.500 Z" fill="#e4e4e4"/>
<!-- layer manager -->
<g stroke="#e4e4e4" stroke-width="1.600" fill="none" stroke-linecap="round" stroke-linejoin="round">
<rect x="774" y="32" width="12.500" height="8.800" rx="1.500"/>
<path d="M776,44.800 H789 M778,48.700 H790.500 Q792,48.500 792.500,46.800"/>
</g>
<rect x="789.200" y="31.800" width="9.500" height="11.300" rx="2.200" fill="none" stroke="#2a9df4" stroke-width="1.600"/>
<path d="M792.500,35.300 H795.500 M792.500,39.300 H795.500" stroke="#2a9df4" stroke-width="1.400"/>
<!-- layer row 1 -->
<g stroke="#dcdcdc" stroke-width="1.100" fill="none" stroke-linecap="round" stroke-linejoin="round">
<path d="M806.500,33 Q812.700,26.800 819,33 Q812.700,39.200 806.500,33 Z"/><circle cx="812.700" cy="33" r="2.700"/>
<rect x="839" y="32.500" width="8.500" height="5.500" rx="1.200"/><path d="M843.500,32.500 V31 A2.800,2.800 0 0 0 837.900,31"/>
</g>
<rect x="842.500" y="34.500" width="1.500" height="2" fill="#dcdcdc"/>
<g stroke="#f0c93a" stroke-width="1.100" fill="none" stroke-linecap="round">
<circle cx="827" cy="32.800" r="2.600"/>
<path d="M827,27 V28.700 M827,36.900 V38.600 M821.200,32.800 H822.900 M831.100,32.800 H832.800 M822.900,28.700 L824.100,29.900 M829.900,35.700 L831.100,36.900 M831.100,28.700 L829.900,29.900 M824.100,35.700 L822.900,36.900"/>
</g>
<rect x="850.500" y="26.500" width="13.200" height="13" fill="#fad72d"/>
<path d="M917,31.500 H924 L920.500,35.500 Z" fill="#e4e4e4"/>
<!-- layer row 2,3 small monitors -->
<g stroke="#dcdcdc" stroke-width="1.100" fill="none" stroke-linecap="round" stroke-linejoin="round">
<rect x="807.500" y="48.300" width="8" height="5" rx="1.200"/>
<rect x="824.500" y="48.300" width="8" height="5" rx="1.200"/>
<rect x="842" y="48.300" width="8" height="5" rx="1.200"/>
<rect x="807.500" y="67.500" width="8" height="5" rx="1.200"/><path d="M809,74.500 H813 M810,76.500 H813" stroke-width="0.800"/>
<rect x="824.500" y="67.500" width="8" height="5" rx="1.200"/><path d="M826,74.500 H830 M827,76.500 H830" stroke-width="0.800"/>
<rect x="842" y="67.500" width="8" height="5" rx="1.200"/>
</g>
<g stroke="#2a9df4" stroke-width="1.100" fill="none" stroke-linecap="round" stroke-linejoin="round">
<path d="M812.500,54 Q816.500,57 820.500,53.500 M813.500,56 L812.500,57.500 M816,56.500 V58 M818.500,56 L819.500,57.500"/>
<circle cx="834" cy="55" r="3.200"/><path d="M834,51.800 V58.200 M831.200,53.400 L836.800,56.600 M836.800,53.400 L831.200,56.600" stroke-width="0.800"/>
<rect x="849" y="54" width="5.500" height="4.500" rx="1"/><path d="M850.200,54 V52.800 A1.600,1.600 0 0 1 853.400,52.800 V54"/>
<rect x="861" y="47" width="9" height="5.500" rx="1.200"/><path d="M861.500,55 H868 M862.500,57.500 H868"/>
</g>
<path d="M867.500,52.500 L869.500,55 L874,48.500" stroke="#2fbf4f" stroke-width="1.300" fill="none" stroke-linecap="round" stroke-linejoin="round"/>
<g stroke="#e6c12f" stroke-width="1.100" fill="none" stroke-linecap="round" stroke-linejoin="round">
<path d="M812.500,74.500 Q816.500,70.500 820.500,74.500 Q816.500,78.500 812.500,74.500 Z"/><circle cx="816.500" cy="74.500" r="1.200"/>
<circle cx="834" cy="74.500" r="1.800"/><path d="M834,70.500 V71.500 M834,77.500 V78.500 M830,74.500 H831 M837,74.500 H838 M831.200,71.700 L831.900,72.400 M836.100,76.600 L836.800,77.300 M836.800,71.700 L836.100,72.400 M831.900,76.600 L831.200,77.300"/>
<circle cx="849.500" cy="72.500" r="2.600"/><circle cx="852" cy="75.500" r="2.600"/>
</g>
<!-- match properties -->
<g stroke="#e4e4e4" stroke-width="1.600" fill="none" stroke-linecap="round" stroke-linejoin="round">
<path d="M950,32.300 H939.500 Q937.800,32.300 937.800,34 V46.500 Q937.800,48.200 939.500,48.200 H948"/>
<path d="M941.500,37.500 H947 M941.500,42.500 H946"/>
</g>
<g stroke="#2a9df4" stroke-width="1.600" fill="none" stroke-linecap="round" stroke-linejoin="round">
<path d="M953.500,40 V35.500 Q953.500,33.500 955.700,33.500 Q957.900,33.500 957.900,35.500 V40 H960.500 Q962.300,40 962.300,41.800 V46.500 Q962.300,48.300 960.500,48.300 H951 Q949.200,48.300 949.200,46.500 V41.800 Q949.200,40 951,40 Z M949.500,44 H962"/>
</g>
<!-- color grid -->
<rect x="971.800" y="26.200" width="7.200" height="6.800" rx="1" fill="#ffd04a"/>
<rect x="979" y="26.200" width="7.300" height="6.800" rx="1" fill="#32b6ff"/>
<rect x="971.800" y="33" width="7.200" height="7" rx="1" fill="#3cb84a"/>
<rect x="979" y="33" width="7.300" height="7" rx="1" fill="#f0644c"/>
<rect x="989.800" y="26.200" width="13.300" height="12.800" fill="#fad72d"/>
<g fill="#8b909a"><path d="M1062,31.500 H1069 L1065.500,35.500 Z"/><path d="M1062,51.500 H1069 L1065.500,55.500 Z"/><path d="M1062,71.500 H1069 L1065.500,75.500 Z"/></g>
<!-- lineweight icon -->
<g stroke="#e4e4e4" fill="none" stroke-linecap="round">
<path d="M971.500,47.200 H986.500" stroke-width="1"/><path d="M971.500,51.500 H986.500" stroke-width="1.500"/><path d="M972,57 H986" stroke-width="3"/>
</g>
<rect x="988.500" y="49.700" width="33.300" height="6.300" fill="#fafafa"/>
<!-- linetype icon -->
<g stroke="#e4e4e4" fill="none" stroke-width="1.100">
<path d="M971,67.500 H987"/><path d="M971,71 H987" stroke-dasharray="6,2,2,2"/><path d="M971,74.500 H987" stroke-dasharray="4,2"/><path d="M971,78 H987" stroke-dasharray="2,2"/>
</g>
<path d="M988.500,72.500 H1019.500" stroke="#b8bcc4" stroke-width="0.800"/>
<!-- clip viewport -->
<rect x="1085" y="30" width="21.500" height="20.500" rx="2" fill="#2a4a68"/>
<g stroke="#e4e4e4" stroke-width="1.600" fill="none" stroke-linecap="round" stroke-linejoin="round">
<path d="M1084.800,34.500 V32 Q1084.800,29.800 1087,29.800 H1089.500 M1102,29.800 H1104.500 Q1106.700,29.800 1106.700,32 V34.500 M1106.700,46.500 V49 Q1106.700,51.200 1104.500,51.200 H1102 M1089.500,51.200 H1087 Q1084.800,51.200 1084.800,49 V46.500"/>
</g>
<g stroke="#2a9df4" stroke-width="1.700" fill="none" stroke-linecap="round" stroke-linejoin="round">
<path d="M1091.500,33.500 V44 H1102.500 M1089,37 H1099.500 V47.500"/>
</g>
<path d="M1091.700,76.500 H1098.700 L1095.200,80.500 Z" fill="#e4e4e4"/>
<!-- paste -->
<g stroke="#e4e4e4" stroke-width="1.600" fill="none" stroke-linecap="round" stroke-linejoin="round">
<path d="M1136,48.500 H1131.500 Q1129.800,48.500 1129.800,46.800 V34.500 Q1129.800,32.800 1131.500,32.800 H1144.500 Q1146.200,32.800 1146.200,34.500 V36"/>
<path d="M1134.500,32.800 V31 Q1134.500,29.800 1135.700,29.800 H1140.300 Q1141.500,29.800 1141.500,31 V32.800"/>
</g>
<g stroke="#2a9df4" stroke-width="1.600" fill="none" stroke-linecap="round" stroke-linejoin="round">
<path d="M1139.500,37.500 H1148.500 Q1150.500,37.500 1150.500,39.500 V46.500 L1146.500,50.800 H1139.500 Q1137.500,50.800 1137.500,48.800 V39.500 Q1137.500,37.500 1139.500,37.500 Z"/>
<path d="M1141,42 H1147 M1141,46 H1145"/>
</g>
<path d="M1136.700,76.500 H1143.700 L1140.200,80.500 Z" fill="#e4e4e4"/>
<!-- small tools -->
<rect x="1162" y="30.500" width="8" height="8" rx="1.500" fill="none" stroke="#dcdcdc" stroke-width="1.100"/>
<rect x="1164.500" y="27.800" width="8" height="8" rx="1.500" fill="#363a43" stroke="#2a9df4" stroke-width="1.200"/>
<path d="M1175.300,31.500 H1182.300 L1178.800,35.500 Z" fill="#e4e4e4"/>
<rect x="1161.500" y="48" width="8.500" height="6.500" rx="1.300" fill="none" stroke="#2a9df4" stroke-width="1.200"/>
<path d="M1163.500,50.200 H1167.500 M1163.500,52.300 H1166" stroke="#2a9df4" stroke-width="0.900"/>
<g stroke="#dcdcdc" stroke-width="0.900" fill="none"><path d="M1168,51 L1173.500,56.500 M1173.500,51.500 L1169.500,55"/><circle cx="1169" cy="56.500" r="1.200"/><circle cx="1174" cy="57.300" r="1.200"/></g>
<path d="M1175.300,51 H1182.300 L1178.800,55 Z" fill="#e4e4e4"/>
<path d="M1161.500,73 L1164.300,66.300 L1167,73 M1162.500,71 H1166" stroke="#dcdcdc" stroke-width="1.100" fill="none" stroke-linecap="round" stroke-linejoin="round"/>
<g stroke="#2a9df4" stroke-width="1.200" fill="none" stroke-linecap="round"><circle cx="1168.500" cy="71.500" r="2.800"/><path d="M1170.500,73.700 L1172.500,76"/></g>
<!-- style settings (wand) -->
<g transform="translate(1209.500,40.500) rotate(44)" stroke="#e4e4e4" stroke-width="1.500" fill="none" stroke-linecap="round" stroke-linejoin="round">
<rect x="-11.800" y="-3.700" width="23.600" height="7.400" rx="3.700"/>
<path d="M-4.800,-3.700 V3.700"/>
</g>
<g fill="#e4e4e4"><path d="M1216.500,30 L1217.300,32 L1219.300,32.800 L1217.300,33.600 L1216.500,35.600 L1215.700,33.600 L1213.700,32.800 L1215.700,32 Z"/><path d="M1197.600,38.800 L1198.200,40.200 L1199.600,40.800 L1198.200,41.400 L1197.600,42.800 L1197,41.400 L1195.600,40.800 L1197,40.200 Z"/><circle cx="1200.600" cy="47.900" r="1.100"/></g>
<!-- gear -->
<g stroke="#e4e4e4" stroke-width="1.700" fill="none" stroke-linejoin="round">
<circle cx="1247.200" cy="40" r="3.800"/>
<path id="gear" transform="rotate(30 1247.200 40)" d="M1244.600,28.400 H1249.800 L1250.600,31.600 L1253.400,33.200 L1256.500,32.300 L1259.100,36.800 L1256.800,39.100 V40.900 L1259.100,43.200 L1256.500,47.700 L1253.400,46.800 L1250.600,48.400 L1249.800,51.600 H1244.600 L1243.800,48.400 L1241,46.800 L1237.900,47.700 L1235.300,43.200 L1237.600,40.900 V39.100 L1235.300,36.800 L1237.900,32.300 L1241,33.200 L1243.800,31.600 Z"/>
</g>

</svg>

<svg width="1269" height="679" viewBox="0 0 1269 679" style="pointer-events:none">
<line x1="92" y1="91.500" x2="574" y2="518.200" stroke="#ee484e" stroke-width="1.500"/>
<path d="M581.600,524.900 L569.200,521.400 L576.700,513.900 Z" fill="#ee484e"/>
<path d="M956.500,679 V647.500 H1000.500 V679" stroke="#e23b3b" stroke-width="1.600" fill="none"/>
</svg>

</body>
</html>
